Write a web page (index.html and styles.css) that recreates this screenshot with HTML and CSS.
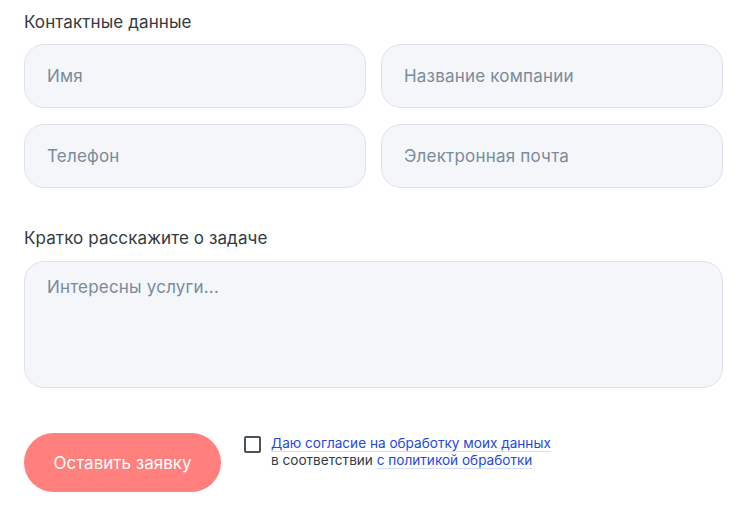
FILE: index.html
```html
<!DOCTYPE html>
<html lang="ru">
<head>
  <meta charset="UTF-8">
  <title>Заявка</title>
  <link rel="stylesheet" href="styles.css">
</head>
<body>
  <form class="request" onsubmit="event.preventDefault();">
    <div class="group-title">Контактные данные</div>
    <div class="grid">
      <input class="field" type="text" placeholder="Имя">
      <input class="field" type="text" placeholder="Название компании">
      <input class="field" type="tel" placeholder="Телефон">
      <input class="field" type="email" placeholder="Электронная почта">
    </div>

    <div class="group-title task-title">Кратко расскажите о задаче</div>
    <textarea class="field area" placeholder="Интересны услуги..."></textarea>

    <div class="bottom">
      <button type="submit" class="send">Оставить заявку</button>
      <label class="agree">
        <input type="checkbox" class="check">
        <span class="agree-text">
          <a href="#">Даю согласие на обработку моих данных</a><br>
          в соответствии <a href="#">с политикой обработки</a>
        </span>
      </label>
    </div>
  </form>
</body>
</html>
```

FILE: styles.css
```css
body {
  margin: 0;
  padding: 12px 17px 0 24px;
  background: #fff;
  color: #333a40;
  font-family: Inter, "Noto Sans", sans-serif;
}
.group-title { font-size: 17px; line-height: 20px; margin-bottom: 12px; letter-spacing: 0.1px; }
.task-title { margin-top: 40px; margin-bottom: 13px; }
.grid {
  display: grid;
  grid-template-columns: 1fr 1fr;
  gap: 16px 15px;
}
.field {
  box-sizing: border-box;
  height: 64px;
  padding: 0 22px;
  border: 1px solid #dde3ea;
  border-radius: 20px;
  background: #f4f6f9;
  font-family: inherit;
  font-size: 17px;
  letter-spacing: 0.2px;
  color: #333a40;
  outline: none;
}
.field::placeholder { color: #7a8b9b; }
.area {
  display: block;
  width: 100%;
  height: 127px;
  padding: 15px 22px;
  resize: none;
}
.bottom {
  display: flex;
  align-items: flex-start;
  margin-top: 45px;
}
.send {
  width: 197px;
  height: 59px;
  border: none;
  border-radius: 30px;
  background: #ff807c;
  color: #fff;
  font-family: inherit;
  font-size: 17px;
  cursor: pointer;
}
.agree {
  display: flex;
  align-items: flex-start;
  margin-left: 23px;
  margin-top: 2px;
  font-size: 13.6px;
  line-height: 17px;
}
.check {
  appearance: none;
  width: 17px;
  height: 17px;
  margin: 1px 10px 0 0;
  border: 2px solid #4a525a;
  border-radius: 2px;
  box-sizing: border-box;
}
.agree-text a {
  color: #2548e0;
  text-decoration: none;
  border-bottom: 1px solid #d3dcf8;
}
```
